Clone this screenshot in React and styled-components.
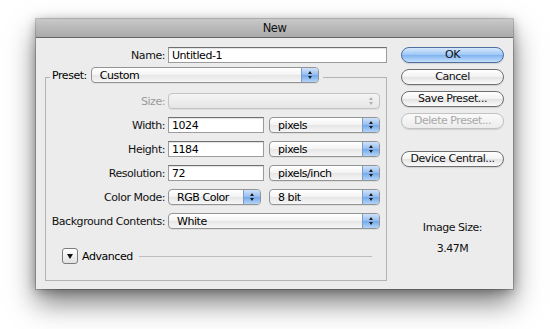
import React from "react";
import styled, { createGlobalStyle, css } from "styled-components";

const GlobalStyle = createGlobalStyle`
  html, body {
    margin: 0;
    background: #ffffff;
  }
  body {
    font-family: "DejaVu Sans", "Lucida Grande", sans-serif;
    font-size: 11px;
    letter-spacing: -0.45px;
    color: #000;
  }
`;

const Page = styled.div`
  width: 550px;
  height: 329px;
  padding: 19px 0 0 36px;
  box-sizing: border-box;
`;

const Dialog = styled.div`
  width: 477px;
  background: #ececec;
  box-shadow: 0 0 0 1px rgba(0, 0, 0, 0.2), 0 14px 26px rgba(0, 0, 0, 0.5),
    0 2px 10px rgba(0, 0, 0, 0.3);
`;

const TitleBar = styled.div`
  height: 18px;
  line-height: 18px;
  text-align: center;
  font-size: 11.5px;
  color: #111;
  background: linear-gradient(#c9c9c9, #a9a9a9);
  border-bottom: 1px solid #666;
`;

const Body = styled.div`
  display: flex;
  gap: 14px;
  padding: 9px 9px 8px 9px;
`;

const LeftColumn = styled.div`
  width: 342px;
  display: flex;
  flex-direction: column;
`;

const Row = styled.div`
  display: flex;
  align-items: center;
  height: 16px;
`;

const Label = styled.label`
  width: ${(p) => p.$w || 119}px;
  padding-right: 3px;
  text-align: right;
  white-space: nowrap;
  color: ${(p) => (p.$disabled ? "#9a9a9a" : "#111")};
  flex-shrink: 0;
`;

const Fields = styled.div`
  display: flex;
  align-items: center;
  width: ${(p) => p.$w || 212}px;
  gap: 5px;
`;

const TextInput = styled.input`
  box-sizing: border-box;
  width: ${(p) => p.$w}px;
  height: 16px;
  padding: 0 3px;
  font: inherit;
  letter-spacing: inherit;
  color: #000;
  background: #fff;
  border: 1px solid #9c9c9c;
  border-top-color: #6f6f6f;
  box-shadow: inset 0 1px 1px rgba(0, 0, 0, 0.12);
  outline: none;
`;

const SelectBox = styled.div`
  box-sizing: border-box;
  display: flex;
  align-items: center;
  width: ${(p) => p.$w}px;
  height: 16px;
  margin-left: ${(p) => (p.$push ? "auto" : "0")};
  padding-left: 8px;
  border: 1px solid ${(p) => (p.$disabled ? "#c4c4c4" : "#939393")};
  border-radius: 4px;
  background: ${(p) =>
    p.$disabled
      ? "linear-gradient(#f4f4f4, #e6e6e6)"
      : "linear-gradient(#ffffff, #f3f3f3 50%, #e6e6e6 51%, #f6f6f6)"};
  box-shadow: 0 1px 0 rgba(0, 0, 0, 0.06);
  overflow: hidden;
`;

const ArrowBox = styled.div`
  margin-left: auto;
  width: 16px;
  height: 100%;
  display: flex;
  flex-direction: column;
  align-items: center;
  justify-content: center;
  gap: 2px;
  ${(p) =>
    !p.$disabled &&
    css`
      background: linear-gradient(#cfe2fa, #94bdf0 50%, #73a8ec 51%, #b4d4f8);
      border-left: 1px solid #7a9bc8;
    `}
`;

const Tri = styled.span`
  width: 0;
  height: 0;
  border-left: 2.5px solid transparent;
  border-right: 2.5px solid transparent;
  ${(p) =>
    p.$up
      ? css`border-bottom: 3px solid ${p.$disabled ? "#b0b0b0" : "#1d1d1d"};`
      : css`border-top: 3px solid ${p.$disabled ? "#b0b0b0" : "#1d1d1d"};`}
`;

const Select = ({ w, value, disabled, push }) => (
  <SelectBox $w={w} $disabled={disabled} $push={push}>
    <span>{value}</span>
    <ArrowBox $disabled={disabled}>
      <Tri $up $disabled={disabled} />
      <Tri $disabled={disabled} />
    </ArrowBox>
  </SelectBox>
);

const Group = styled.fieldset`
  margin: 4px 0 0 0;
  padding: 6px 6px 16px 0;
  min-width: 0;
  border: 1px solid #b4b4b4;
  display: flex;
  flex-direction: column;
  gap: 8px;
`;

const Legend = styled.legend`
  display: flex;
  align-items: center;
  gap: 4px;
  margin-left: 4px;
  padding: 0 4px 4px 2px;
  height: 16px;
`;

const AdvancedRow = styled.div`
  display: flex;
  align-items: center;
  height: 16px;
  margin: 11px 8px 0 16px;
`;

const Disclosure = styled.button`
  width: 16px;
  height: 16px;
  padding: 0;
  margin-right: 4px;
  border: 1px solid #7c7c7c;
  border-radius: 3px;
  background: linear-gradient(#ffffff, #e2e2e2);
  display: flex;
  align-items: center;
  justify-content: center;
  &::after {
    content: "";
    border-left: 3.5px solid transparent;
    border-right: 3.5px solid transparent;
    border-top: 5px solid #111;
    margin-top: 1px;
  }
`;

const Rule = styled.div`
  flex: 1;
  height: 1px;
  margin-left: 6px;
  background: #bdbdbd;
`;

const RightColumn = styled.div`
  width: 103px;
  display: flex;
  flex-direction: column;
  align-items: stretch;
`;

const PillButton = styled.button`
  box-sizing: border-box;
  height: 16px;
  margin-top: ${(p) => p.$mt || 0}px;
  padding: 0;
  font: inherit;
  letter-spacing: inherit;
  line-height: 14px;
  border-radius: 8px;
  color: ${(p) => (p.disabled ? "#a8a8a8" : "#111")};
  border: 1px solid ${(p) => (p.disabled ? "#c2c2c2" : "#6f6f6f")};
  background: ${(p) =>
    p.$primary
      ? "linear-gradient(#d6e8fd, #9cc6f4 50%, #7fb3ef 51%, #c4e0fc)"
      : p.disabled
      ? "linear-gradient(#fafafa, #ececec)"
      : "linear-gradient(#ffffff, #f2f2f2 50%, #e3e3e3 51%, #fbfbfb)"};
  ${(p) => p.$primary && css`border-color: #4f6f9f;`}
  box-shadow: 0 1px 1px rgba(0, 0, 0, 0.12);
`;

const InfoLabel = styled.div`
  text-align: center;
  line-height: 14px;
  margin-top: ${(p) => p.$mt}px;
  color: #111;
`;

export default function App() {
  return (
    <Page>
      <GlobalStyle />
      <Dialog>
        <TitleBar>New</TitleBar>
        <Body>
          <LeftColumn>
            <Row>
              <Label $w={120}>Name:</Label>
              <TextInput $w={219} defaultValue="Untitled-1" />
            </Row>
            <Group>
              <Legend>
                <span>Preset:</span>
                <Select w={228} value="Custom" />
              </Legend>
              <Row>
                <Label $disabled>Size:</Label>
                <Fields>
                  <Select w={212} value="" disabled />
                </Fields>
              </Row>
              <Row>
                <Label>Width:</Label>
                <Fields>
                  <TextInput $w={96} defaultValue="1024" />
                  <Select w={111} value="pixels" push />
                </Fields>
              </Row>
              <Row>
                <Label>Height:</Label>
                <Fields>
                  <TextInput $w={96} defaultValue="1184" />
                  <Select w={111} value="pixels" push />
                </Fields>
              </Row>
              <Row>
                <Label>Resolution:</Label>
                <Fields>
                  <TextInput $w={96} defaultValue="72" />
                  <Select w={111} value="pixels/inch" push />
                </Fields>
              </Row>
              <Row>
                <Label>Color Mode:</Label>
                <Fields>
                  <Select w={93} value="RGB Color" />
                  <Select w={111} value="8 bit" push />
                </Fields>
              </Row>
              <Row>
                <Label>Background Contents:</Label>
                <Fields>
                  <Select w={212} value="White" />
                </Fields>
              </Row>
              <AdvancedRow>
                <Disclosure aria-label="Advanced" />
                <span>Advanced</span>
                <Rule />
              </AdvancedRow>
            </Group>
          </LeftColumn>
          <RightColumn>
            <PillButton $primary>OK</PillButton>
            <PillButton $mt={6}>Cancel</PillButton>
            <PillButton $mt={6}>Save Preset...</PillButton>
            <PillButton $mt={6} disabled>
              Delete Preset...
            </PillButton>
            <PillButton $mt={22}>Device Central...</PillButton>
            <InfoLabel $mt={54}>Image Size:</InfoLabel>
            <InfoLabel $mt={7}>3.47M</InfoLabel>
          </RightColumn>
        </Body>
      </Dialog>
    </Page>
  );
}
